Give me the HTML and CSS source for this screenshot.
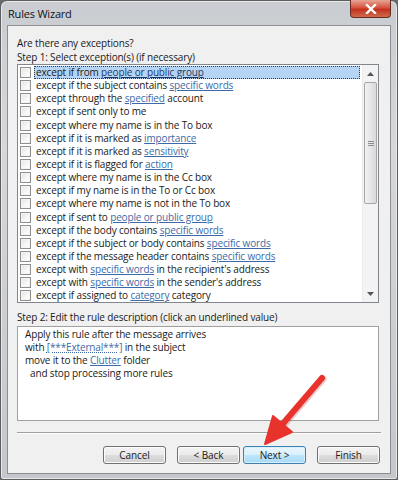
FILE: index.html
```html
<!DOCTYPE html>
<html>
<head>
<meta charset="utf-8">
<link rel="stylesheet" href="styles.css">
</head>
<body>
<div class="window">
  <div class="titlebar">
    <span class="title">Rules Wizard</span>
    <div class="close"><svg width="12" height="10" viewBox="0 0 12 10"><path d="M2 1 L10 9 M10 1 L2 9" stroke="#fff" stroke-width="2.4" stroke-linecap="square"/></svg></div>
  </div>
  <div class="client">
    <div class="heading">Are there any exceptions?</div>
    <div class="label">Step 1: Select exception(s) (if necessary)</div>
    <div class="listbox">
      <div class="rows">
        <div class="row selected"><span class="cb"></span><span class="txt">except if from <u class="lk">people or public group</u></span></div>
        <div class="row"><span class="cb"></span><span class="txt">except if the subject contains <u class="lk">specific words</u></span></div>
        <div class="row"><span class="cb"></span><span class="txt">except through the <u class="lk">specified</u> account</span></div>
        <div class="row"><span class="cb"></span><span class="txt">except if sent only to me</span></div>
        <div class="row"><span class="cb"></span><span class="txt">except where my name is in the To box</span></div>
        <div class="row"><span class="cb"></span><span class="txt">except if it is marked as <u class="lk">importance</u></span></div>
        <div class="row"><span class="cb"></span><span class="txt">except if it is marked as <u class="lk">sensitivity</u></span></div>
        <div class="row"><span class="cb"></span><span class="txt">except if it is flagged for <u class="lk">action</u></span></div>
        <div class="row"><span class="cb"></span><span class="txt">except where my name is in the Cc box</span></div>
        <div class="row"><span class="cb"></span><span class="txt">except if my name is in the To or Cc box</span></div>
        <div class="row"><span class="cb"></span><span class="txt">except where my name is not in the To box</span></div>
        <div class="row"><span class="cb"></span><span class="txt">except if sent to <u class="lk">people or public group</u></span></div>
        <div class="row"><span class="cb"></span><span class="txt">except if the body contains <u class="lk">specific words</u></span></div>
        <div class="row"><span class="cb"></span><span class="txt">except if the subject or body contains <u class="lk">specific words</u></span></div>
        <div class="row"><span class="cb"></span><span class="txt">except if the message header contains <u class="lk">specific words</u></span></div>
        <div class="row"><span class="cb"></span><span class="txt">except with <u class="lk">specific words</u> in the recipient's address</span></div>
        <div class="row"><span class="cb"></span><span class="txt">except with <u class="lk">specific words</u> in the sender's address</span></div>
        <div class="row"><span class="cb"></span><span class="txt">except if assigned to <u class="lk">category</u> category</span></div>
      </div>
      <div class="scrollbar">
        <div class="sb-btn"><svg width="7" height="4" viewBox="0 0 7 4"><path d="M0 4 L3.5 0 L7 4Z" fill="#555"/></svg></div>
        <div class="sb-track">
          <div class="thumb"><span class="grip"></span></div>
        </div>
        <div class="sb-btn"><svg width="7" height="4" viewBox="0 0 7 4"><path d="M0 0 L3.5 4 L7 0Z" fill="#555"/></svg></div>
      </div>
    </div>
    <div class="label step2">Step 2: Edit the rule description (click an underlined value)</div>
    <div class="desc">
      <div>Apply this rule after the message arrives</div>
      <div>with <u class="lk dotted">[***External***]</u> in the subject</div>
      <div>move it to the <u class="lk">Clutter</u> folder</div>
      <div class="indent">and stop processing more rules</div>
    </div>
    <div class="sep"></div>
    <div class="buttons">
      <button class="btn">Cancel</button>
      <div class="pair">
        <button class="btn">&lt; Back</button>
        <button class="btn default">Next &gt;</button>
      </div>
      <button class="btn">Finish</button>
    </div>
  </div>
  <svg class="arrow" width="398" height="480" viewBox="0 0 398 480">
    <line x1="280" y1="427" x2="322" y2="378" stroke="#b02a22" stroke-width="7" stroke-linecap="round" opacity="0.25" transform="translate(1,1)"/>
    <line x1="280" y1="427" x2="322" y2="378" stroke="#e8332c" stroke-width="6" stroke-linecap="round"/>
    <path d="M265 444 L292 432 L273 416 Z" fill="#e8332c" stroke="#e8332c" stroke-width="2" stroke-linejoin="round"/>
  </svg>
</div>
</body>
</html>
```
FILE: styles.css
```css
* { box-sizing: border-box; }
html, body { margin: 0; padding: 0; }
body {
  width: 398px;
  height: 480px;
  overflow: hidden;
  background: #6a6a6a;
  font-family: "Open Sans", "Noto Sans", sans-serif;
  color: #1a1a1a;
}
.window {
  position: relative;
  width: 398px;
  height: 480px;
  border: 1px solid #5e5e5e;
  border-radius: 7px 7px 3px 3px;
  background: linear-gradient(to bottom, #c9ccd0 0%, #d5d7da 30%, #c4c7cb 100%);
  box-shadow: inset 0 0 0 1px #e6e8ea;
  display: flex;
  flex-direction: column;
}
.titlebar {
  height: 24px;
  display: flex;
  align-items: flex-start;
  justify-content: space-between;
  padding-left: 7px;
}
.title {
  font-size: 11px;
  line-height: 26px;
  color: #111;
  letter-spacing: -0.2px;
}
.close {
  width: 41px;
  height: 18px;
  margin-right: 6px;
  margin-top: -1px;
  border: 1px solid #6b2a22;
  border-top: none;
  border-radius: 0 0 4px 4px;
  background: linear-gradient(to bottom, #e8a596 0%, #d5533f 45%, #c2321c 55%, #d06a4c 100%);
  display: flex;
  align-items: center;
  justify-content: center;
}
.client {
  flex: 1;
  margin: 0 6px 5px 6px;
  background: #f0f0f0;
  border: 1px solid #8c8e92;
  padding: 10px 0 0 9px;
  font-size: 10px;
  letter-spacing: -0.15px;
  display: flex;
  flex-direction: column;
}
.heading { line-height: 14px; }
.label { line-height: 14px; }
.listbox {
  width: 362px;
  height: 239px;
  border: 1px solid #82878f;
  background: #fff;
  display: flex;
}
.rows {
  flex: 1;
  padding-top: 1px;
  overflow: hidden;
}
.row {
  height: 13.15px;
  display: flex;
  align-items: center;
  white-space: nowrap;
  line-height: 13px;
}
.cb {
  width: 11px;
  height: 11px;
  margin-left: 2px;
  margin-right: 5px;
  border: 1px solid #8e8f8f;
  background: linear-gradient(135deg, #e3e3e3 0%, #fafafa 70%);
  box-shadow: inset 0 0 0 1px #f4f4f4;
  flex: none;
}
.txt {
  flex: 1;
  height: 13px;
  margin-right: 2px;
}
.selected .txt {
  background: #b6d4f3;
  outline: 1px dotted #3b3b3b;
  outline-offset: -1px;
  margin-left: -2px;
  padding-left: 2px;
}
.selected .lk { color: #1c3866; }
.lk {
  color: #3d6aa6;
  text-decoration: underline;
  text-underline-offset: 1px;
}
.dotted { text-decoration-style: dotted; }
.scrollbar {
  width: 16px;
  display: flex;
  flex-direction: column;
  background: #f3f3f3;
  border-left: 1px solid #ececec;
}
.sb-btn {
  height: 17px;
  display: flex;
  align-items: center;
  justify-content: center;
}
.sb-track {
  flex: 1;
  padding: 0 1px;
}
.thumb {
  height: 122px;
  border: 1px solid #a6a6a6;
  border-radius: 2px;
  background: linear-gradient(to right, #f2f2f2, #e6e6e6 50%, #d9d9d9);
  display: flex;
  align-items: center;
  justify-content: center;
}
.grip {
  width: 6px;
  height: 5px;
  border-top: 1px solid #8e8e8e;
  border-bottom: 1px solid #8e8e8e;
  background: linear-gradient(to bottom, transparent 1px, #8e8e8e 1px, #8e8e8e 2px, transparent 2px);
}
.step2 { margin-top: 7px; }
.desc {
  margin-top: 2px;
  width: 362px;
  height: 95px;
  border: 1px solid #a0a0a0;
  background: #fff;
  padding: 1px 0 0 7px;
  line-height: 13px;
}
.indent { padding-left: 5px; }
.sep {
  margin-top: 11px;
  width: 364px;
  height: 2px;
  border-top: 1px solid #a0a0a0;
  border-bottom: 1px solid #fff;
}
.buttons {
  margin-top: 12px;
  display: flex;
  padding-left: 86px;
  gap: 11px;
}
.pair { display: flex; gap: 3px; }
.btn {
  width: 63px;
  height: 18px;
  padding: 0;
  font-family: inherit;
  font-size: 10px;
  letter-spacing: -0.1px;
  color: #1a1a1a;
  border: 1px solid #707070;
  border-radius: 3px;
  background: linear-gradient(to bottom, #f3f3f3 0%, #ebebeb 50%, #dddddd 51%, #cfcfcf 100%);
  box-shadow: inset 0 0 0 1px #fcfcfc;
}
.btn.default {
  border-color: #3c7fb1;
  background: linear-gradient(to bottom, #eaf6fd 0%, #d9f0fc 50%, #bee6fd 51%, #a7d9f5 100%);
  box-shadow: inset 0 0 0 1px #d8effc;
}
.arrow {
  position: absolute;
  left: -1px;
  top: -1px;
  pointer-events: none;
}
```
